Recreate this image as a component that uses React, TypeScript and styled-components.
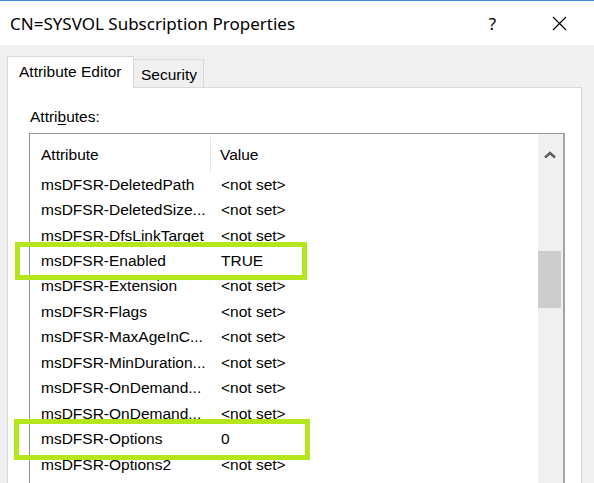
import React from "react";
import styled, { createGlobalStyle } from "styled-components";

const GlobalStyle = createGlobalStyle`
  html, body {
    margin: 0;
    padding: 0;
    background: #f0f0f0;
  }
  body {
    font-family: "Liberation Sans", Arial, sans-serif;
    color: #000;
    overflow: hidden;
  }
`;

const Dialog = styled.div`
  width: 594px;
  display: flex;
  flex-direction: column;
`;

const TitleBar = styled.div`
  height: 44px;
  border-top: 1px solid #3d8fdc;
  background: #fff;
  display: flex;
  align-items: center;
`;

const Title = styled.div`
  flex: 1;
  padding-left: 10px;
  font-family: "Noto Sans", "Open Sans", sans-serif;
  font-size: 17px;
  color: #000;
`;

const CaptionButton = styled.div<{ $shift?: number }>`
  box-sizing: border-box;
  width: 69px;
  height: 44px;
  display: flex;
  align-items: center;
  justify-content: center;
  padding-left: ${(p) => p.$shift ?? 0}px;
  font-family: "Noto Sans", sans-serif;
  font-size: 17px;
`;

const Body = styled.div`
  padding: 11px 12px 0 7px;
  background: #f0f0f0;
`;

const TabStrip = styled.div`
  display: flex;
  align-items: flex-end;
  height: 31px;
`;

const Tab = styled.div<{ $active?: boolean }>`
  box-sizing: border-box;
  display: flex;
  align-items: center;
  font-size: 15.5px;
  border: 1px solid #d9d9d9;
  border-bottom: none;
  ${(p) =>
    p.$active
      ? `
    width: 127px;
    height: 32px;
    margin-bottom: -1px;
    padding: 0 0 2px 11px;
    background: #fff;
    position: relative;
    z-index: 1;
  `
      : `
    width: 70px;
    height: 28px;
    border-left: none;
    padding: 2px 0 0 7px;
    background: #f0f0f0;
  `}
`;

const Panel = styled.div`
  border: 1px solid #d9d9d9;
  border-bottom: none;
  background: #fff;
  padding: 20px 16px 0 21px;
  height: 420px;
`;

const Label = styled.div`
  font-size: 15.5px;
  line-height: 18px;
  margin: 0 0 7px 1px;
  u {
    text-decoration-thickness: 1px;
    text-underline-offset: 2px;
  }
`;

const ListBox = styled.div`
  display: flex;
  height: 360px;
  border-top: 1px solid #9a9ba0;
  border-left: 1px solid #8e8f94;
  border-right: 2px solid #a3a4a8;
  background: #fff;
`;

const ListContent = styled.div`
  flex: 1;
  display: flex;
  flex-direction: column;
`;

const HeaderRow = styled.div`
  height: 38px;
  display: flex;
  font-size: 15.5px;
`;

const HeaderCell = styled.div<{ $first?: boolean }>`
  box-sizing: border-box;
  margin-top: 3px;
  display: flex;
  align-items: center;
  ${(p) =>
    p.$first
      ? `width: 181px; padding-left: 11px; border-right: 1px solid #e5e5e5;`
      : `flex: 1; padding-left: 9px;`}
`;

const Row = styled.div`
  position: relative;
  height: 25.45px;
  display: flex;
  align-items: center;
  font-size: 15.5px;
`;

const NameCell = styled.div`
  box-sizing: border-box;
  width: 181px;
  padding-left: 11px;
  white-space: nowrap;
  overflow: hidden;
`;

const ValueCell = styled.div`
  flex: 1;
  padding-left: 10px;
  white-space: nowrap;
`;

const Highlight = styled.span<{ $left: number; $top: number; $width: number; $height: number }>`
  position: absolute;
  left: ${(p) => p.$left}px;
  top: ${(p) => p.$top}px;
  width: ${(p) => p.$width}px;
  height: ${(p) => p.$height}px;
  box-sizing: border-box;
  border: 5px solid #b5e61d;
  pointer-events: none;
  z-index: 2;
`;

const ScrollBar = styled.div`
  width: 25px;
  background: #f0f0f0;
  display: flex;
  flex-direction: column;
`;

const ScrollArrow = styled.div`
  height: 25px;
  display: flex;
  align-items: flex-end;
  justify-content: center;
  padding-right: 1px;
`;

const Thumb = styled.div`
  margin: 92px 2px 0 0;
  height: 57px;
  background: #cdcdcd;
`;

type Attr = {
  name: string;
  value: string;
  mark?: { left: number; top: number; width: number; height: number };
};

const attributes: Attr[] = [
  { name: "msDFSR-DeletedPath", value: "<not set>" },
  { name: "msDFSR-DeletedSize...", value: "<not set>" },
  { name: "msDFSR-DfsLinkTarget", value: "<not set>" },
  {
    name: "msDFSR-Enabled",
    value: "TRUE",
    mark: { left: -15, top: -6, width: 292, height: 38 },
  },
  { name: "msDFSR-Extension", value: "<not set>" },
  { name: "msDFSR-Flags", value: "<not set>" },
  { name: "msDFSR-MaxAgeInC...", value: "<not set>" },
  { name: "msDFSR-MinDuration...", value: "<not set>" },
  { name: "msDFSR-OnDemand...", value: "<not set>" },
  { name: "msDFSR-OnDemand...", value: "<not set>" },
  {
    name: "msDFSR-Options",
    value: "0",
    mark: { left: -16, top: -7, width: 296, height: 41 },
  },
  { name: "msDFSR-Options2", value: "<not set>" },
];

function CloseIcon() {
  return (
    <svg width="15" height="15" viewBox="0 0 15 15">
      <path d="M1 1 L14 14 M14 1 L1 14" stroke="#000" strokeWidth="1.2" fill="none" />
    </svg>
  );
}

function ChevronUp() {
  return (
    <svg width="12" height="8" viewBox="0 0 12 8">
      <path d="M1 6.5 L6 2 L11 6.5" stroke="#606060" strokeWidth="2.6" fill="none" />
    </svg>
  );
}

export default function App() {
  return (
    <>
      <GlobalStyle />
      <Dialog>
        <TitleBar>
          <Title>CN=SYSVOL Subscription Properties</Title>
          <CaptionButton $shift={4}>?</CaptionButton>
          <CaptionButton>
            <CloseIcon />
          </CaptionButton>
        </TitleBar>
        <Body>
          <TabStrip>
            <Tab $active>Attribute Editor</Tab>
            <Tab>Security</Tab>
          </TabStrip>
          <Panel>
            <Label>
              Attri<u>b</u>utes:
            </Label>
            <ListBox>
              <ListContent>
                <HeaderRow>
                  <HeaderCell $first>Attribute</HeaderCell>
                  <HeaderCell>Value</HeaderCell>
                </HeaderRow>
                {attributes.map((a, i) => (
                  <Row key={i}>
                    <NameCell>{a.name}</NameCell>
                    <ValueCell>{a.value}</ValueCell>
                    {a.mark && (
                      <Highlight
                        $left={a.mark.left}
                        $top={a.mark.top}
                        $width={a.mark.width}
                        $height={a.mark.height}
                      />
                    )}
                  </Row>
                ))}
              </ListContent>
              <ScrollBar>
                <ScrollArrow>
                  <ChevronUp />
                </ScrollArrow>
                <Thumb />
              </ScrollBar>
            </ListBox>
          </Panel>
        </Body>
      </Dialog>
    </>
  );
}
